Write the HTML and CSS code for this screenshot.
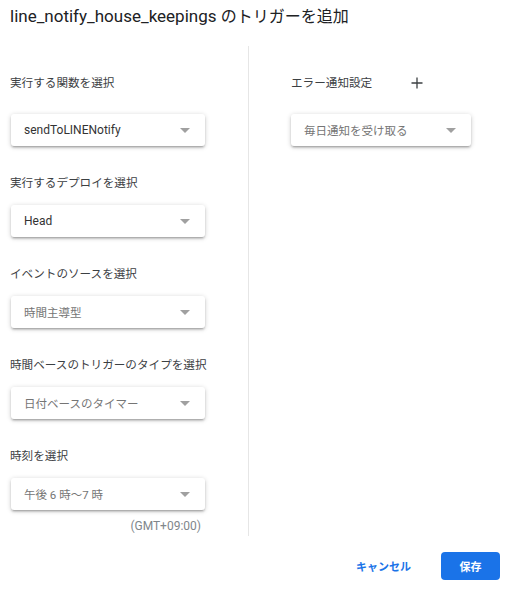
FILE: index.html
```html
<!DOCTYPE html>
<html lang="ja">
<head>
  <meta charset="UTF-8" />
  <meta name="viewport" content="width=device-width, initial-scale=1" />
  <title>トリガーを追加</title>
  <link rel="stylesheet" href="styles.css">
</head>
<body>
  <div class="dialog">
    <h1 class="dialog-title">line_notify_house_keepings <span class="title-ja">のトリガーを追加</span></h1>

    <div class="dialog-body">
      <!-- 左: トリガーの設定 -->
      <div class="col col-left">
        <div class="field first">
          <label class="field-label">実行する関数を選択</label>
          <div class="dropdown">
            <span class="value">sendToLINENotify</span>
            <span class="arrow"></span>
          </div>
        </div>
        <div class="field">
          <label class="field-label">実行するデプロイを選択</label>
          <div class="dropdown">
            <span class="value">Head</span>
            <span class="arrow"></span>
          </div>
        </div>
        <div class="field">
          <label class="field-label">イベントのソースを選択</label>
          <div class="dropdown">
            <span class="value muted">時間主導型</span>
            <span class="arrow"></span>
          </div>
        </div>
        <div class="field">
          <label class="field-label">時間ベースのトリガーのタイプを選択</label>
          <div class="dropdown">
            <span class="value muted">日付ベースのタイマー</span>
            <span class="arrow"></span>
          </div>
        </div>
        <div class="field">
          <label class="field-label">時刻を選択</label>
          <div class="dropdown">
            <span class="value muted">午後 6 時～7 時</span>
            <span class="arrow"></span>
          </div>
          <div class="timezone">(GMT+09:00)</div>
        </div>
      </div>

      <!-- 右: エラー通知 -->
      <div class="col col-right">
        <div class="field first">
          <div class="field-label with-add">
            <span>エラー通知設定</span>
            <svg class="add" width="12" height="12" viewBox="0 0 12 12">
              <path d="M6 0.5v11M0.5 6h11" stroke="#3c4043" stroke-width="1.3" fill="none" />
            </svg>
          </div>
          <div class="dropdown narrow">
            <span class="value muted">毎日通知を受け取る</span>
            <span class="arrow"></span>
          </div>
        </div>
      </div>
    </div>

    <div class="dialog-actions">
      <button class="btn btn-text">キャンセル</button>
      <button class="btn btn-primary">保存</button>
    </div>
  </div>
</body>
</html>
```

FILE: styles.css
```css
body {
  margin: 0;
  background: #fff;
  color: #3c4043;
  font-family: Roboto, "Noto Sans CJK JP", sans-serif;
}
.dialog {
  width: 513px;
  height: 592px;
  box-sizing: border-box;
}
.dialog-title {
  margin: 6px 0 0 10px;
  font-size: 17px;
  font-weight: 400;
  line-height: 20px;
  color: #202124;
}
.title-ja {
  font-size: 16px;
}

.dialog-body {
  display: flex;
  margin-top: 19px;
  height: 490px;
}
.col {
  padding-top: 27px;
  box-sizing: border-box;
}
.col-left {
  width: 249px;
  padding-left: 11px;
  border-right: 1px solid #e6e6e6;
}
.col-right {
  padding-left: 42px;
}

/* 項目 */
.field-label {
  display: block;
  height: 20px;
  font-size: 11.6px;
  line-height: 20px;
  margin-bottom: 12px;
  margin-left: -1px;
  color: #3c4043;
}
.field.first .field-label {
  margin-bottom: 21px;
}
.field {
  margin-bottom: 27px;
}
.with-add {
  display: flex;
  align-items: center;
  margin-left: 0;
}
.add {
  margin-left: 39px;
}

.dropdown {
  display: flex;
  align-items: center;
  justify-content: space-between;
  width: 194px;
  height: 32px;
  padding: 0 15px 0 13px;
  box-sizing: border-box;
  background: #fff;
  border-radius: 3px;
  box-shadow: 0 2px 2px 0 rgba(0,0,0,0.14), 0 3px 1px -2px rgba(0,0,0,0.12), 0 1px 5px 0 rgba(0,0,0,0.2);
}
.dropdown.narrow {
  width: 180px;
}
.value {
  font-size: 12px;
  color: #333;
}
.value.muted {
  font-size: 11.5px;
  color: #757575;
}
.arrow {
  width: 0;
  height: 0;
  border-left: 5px solid transparent;
  border-right: 5px solid transparent;
  border-top: 5px solid #a0a0a0;
}
.timezone {
  width: 190px;
  margin-top: 8px;
  text-align: right;
  font-size: 12px;
  line-height: 16px;
  color: #80868b;
}

/* ボタン */
.dialog-actions {
  display: flex;
  justify-content: flex-end;
  align-items: center;
  gap: 14px;
  margin-top: 16px;
  padding-right: 13px;
}
.btn {
  height: 28px;
  border: none;
  border-radius: 4px;
  font-family: inherit;
  font-size: 11px;
  font-weight: 700;
  cursor: pointer;
}
.btn-text {
  background: none;
  color: #1a73e8;
  padding: 0 16px;
}
.btn-primary {
  width: 59px;
  background: #1a73e8;
  color: #fff;
}
```
